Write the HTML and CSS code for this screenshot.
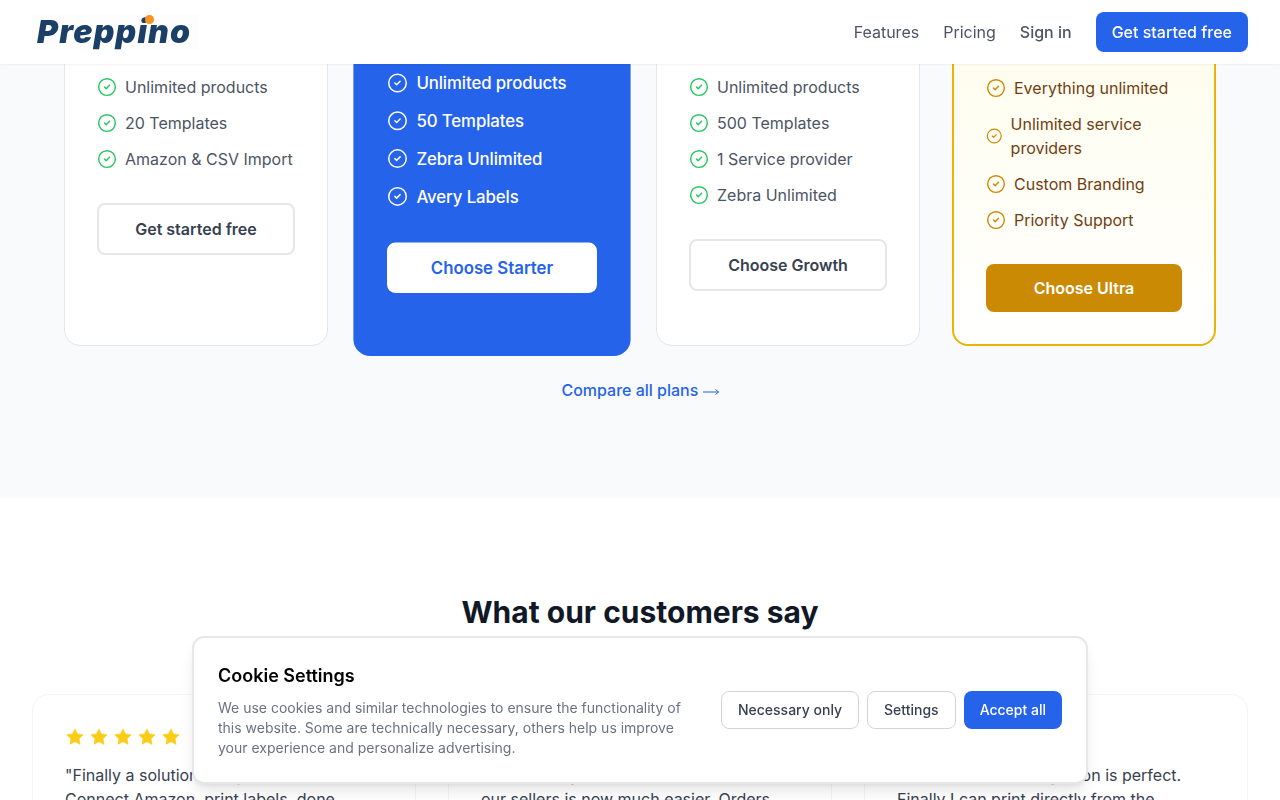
FILE: index.html
```html
<!DOCTYPE html>
<html lang="en">
<head>
    <meta charset="UTF-8">
    <title>Preppino</title>
    <link rel="stylesheet" href="styles.css">
</head>
<body>
    <!-- Top bar -->
    <header class="header">
        <a class="logo" href="#">Preppino<span class="logo-dot"></span></a>
        <nav class="nav">
            <a href="#">Features</a>
            <a href="#">Pricing</a>
            <a class="nav-signin" href="#">Sign in</a>
            <a class="btn-nav" href="#">Get started free</a>
        </nav>
    </header>

    <main class="page">
        <!-- Pricing -->
        <section class="pricing">
            <div class="plans">
                <div class="plan">
                    <ul class="features">
                        <li><svg class="check" viewBox="0 0 24 24"><circle cx="12" cy="12" r="10"/><path d="m9 12 2 2 4-4"/></svg>Unlimited products</li>
                        <li><svg class="check" viewBox="0 0 24 24"><circle cx="12" cy="12" r="10"/><path d="m9 12 2 2 4-4"/></svg>20 Templates</li>
                        <li><svg class="check" viewBox="0 0 24 24"><circle cx="12" cy="12" r="10"/><path d="m9 12 2 2 4-4"/></svg>Amazon &amp; CSV Import</li>
                    </ul>
                    <a class="btn-plan" href="#">Get started free</a>
                </div>
                <div class="plan plan-popular">
                    <ul class="features">
                        <li><svg class="check" viewBox="0 0 24 24"><circle cx="12" cy="12" r="10"/><path d="m9 12 2 2 4-4"/></svg>Unlimited products</li>
                        <li><svg class="check" viewBox="0 0 24 24"><circle cx="12" cy="12" r="10"/><path d="m9 12 2 2 4-4"/></svg>50 Templates</li>
                        <li><svg class="check" viewBox="0 0 24 24"><circle cx="12" cy="12" r="10"/><path d="m9 12 2 2 4-4"/></svg>Zebra Unlimited</li>
                        <li><svg class="check" viewBox="0 0 24 24"><circle cx="12" cy="12" r="10"/><path d="m9 12 2 2 4-4"/></svg>Avery Labels</li>
                    </ul>
                    <a class="btn-plan" href="#">Choose Starter</a>
                </div>
                <div class="plan">
                    <ul class="features">
                        <li><svg class="check" viewBox="0 0 24 24"><circle cx="12" cy="12" r="10"/><path d="m9 12 2 2 4-4"/></svg>Unlimited products</li>
                        <li><svg class="check" viewBox="0 0 24 24"><circle cx="12" cy="12" r="10"/><path d="m9 12 2 2 4-4"/></svg>500 Templates</li>
                        <li><svg class="check" viewBox="0 0 24 24"><circle cx="12" cy="12" r="10"/><path d="m9 12 2 2 4-4"/></svg>1 Service provider</li>
                        <li><svg class="check" viewBox="0 0 24 24"><circle cx="12" cy="12" r="10"/><path d="m9 12 2 2 4-4"/></svg>Zebra Unlimited</li>
                    </ul>
                    <a class="btn-plan" href="#">Choose Growth</a>
                </div>
                <div class="plan plan-ultra">
                    <ul class="features">
                        <li><svg class="check" viewBox="0 0 24 24"><circle cx="12" cy="12" r="10"/><path d="m9 12 2 2 4-4"/></svg>Everything unlimited</li>
                        <li><svg class="check" viewBox="0 0 24 24"><circle cx="12" cy="12" r="10"/><path d="m9 12 2 2 4-4"/></svg><span>Unlimited service providers</span></li>
                        <li><svg class="check" viewBox="0 0 24 24"><circle cx="12" cy="12" r="10"/><path d="m9 12 2 2 4-4"/></svg>Custom Branding</li>
                        <li><svg class="check" viewBox="0 0 24 24"><circle cx="12" cy="12" r="10"/><path d="m9 12 2 2 4-4"/></svg>Priority Support</li>
                    </ul>
                    <a class="btn-plan" href="#">Choose Ultra</a>
                </div>
            </div>
            <a class="compare" href="#">Compare all plans <svg class="arrow" viewBox="0 0 16 8"><path d="M0 4h15.5M12.5 1.5 15.5 4l-3 2.5"/></svg></a>
        </section>

        <!-- Testimonials -->
        <section class="reviews">
            <h2>What our customers say</h2>
            <div class="review-grid">
                <div class="review">
                    <div class="stars">
                        <svg viewBox="0 0 24 24"><path d="M12 2l3.09 6.26L22 9.27l-5 4.87 1.18 6.88L12 17.77l-6.18 3.25L7 14.14 2 9.27l6.91-1.01L12 2z"/></svg>
                        <svg viewBox="0 0 24 24"><path d="M12 2l3.09 6.26L22 9.27l-5 4.87 1.18 6.88L12 17.77l-6.18 3.25L7 14.14 2 9.27l6.91-1.01L12 2z"/></svg>
                        <svg viewBox="0 0 24 24"><path d="M12 2l3.09 6.26L22 9.27l-5 4.87 1.18 6.88L12 17.77l-6.18 3.25L7 14.14 2 9.27l6.91-1.01L12 2z"/></svg>
                        <svg viewBox="0 0 24 24"><path d="M12 2l3.09 6.26L22 9.27l-5 4.87 1.18 6.88L12 17.77l-6.18 3.25L7 14.14 2 9.27l6.91-1.01L12 2z"/></svg>
                        <svg viewBox="0 0 24 24"><path d="M12 2l3.09 6.26L22 9.27l-5 4.87 1.18 6.88L12 17.77l-6.18 3.25L7 14.14 2 9.27l6.91-1.01L12 2z"/></svg>
                    </div>
                    <p>"Finally a solution to my label chaos. Connect Amazon, print labels, done.</p>
                </div>
                <div class="review">
                    <div class="stars">
                        <svg viewBox="0 0 24 24"><path d="M12 2l3.09 6.26L22 9.27l-5 4.87 1.18 6.88L12 17.77l-6.18 3.25L7 14.14 2 9.27l6.91-1.01L12 2z"/></svg>
                        <svg viewBox="0 0 24 24"><path d="M12 2l3.09 6.26L22 9.27l-5 4.87 1.18 6.88L12 17.77l-6.18 3.25L7 14.14 2 9.27l6.91-1.01L12 2z"/></svg>
                        <svg viewBox="0 0 24 24"><path d="M12 2l3.09 6.26L22 9.27l-5 4.87 1.18 6.88L12 17.77l-6.18 3.25L7 14.14 2 9.27l6.91-1.01L12 2z"/></svg>
                        <svg viewBox="0 0 24 24"><path d="M12 2l3.09 6.26L22 9.27l-5 4.87 1.18 6.88L12 17.77l-6.18 3.25L7 14.14 2 9.27l6.91-1.01L12 2z"/></svg>
                        <svg viewBox="0 0 24 24"><path d="M12 2l3.09 6.26L22 9.27l-5 4.87 1.18 6.88L12 17.77l-6.18 3.25L7 14.14 2 9.27l6.91-1.01L12 2z"/></svg>
                    </div>
                    <p>"Onboarding the whole team and all of our sellers is now much easier. Orders</p>
                </div>
                <div class="review">
                    <div class="stars">
                        <svg viewBox="0 0 24 24"><path d="M12 2l3.09 6.26L22 9.27l-5 4.87 1.18 6.88L12 17.77l-6.18 3.25L7 14.14 2 9.27l6.91-1.01L12 2z"/></svg>
                        <svg viewBox="0 0 24 24"><path d="M12 2l3.09 6.26L22 9.27l-5 4.87 1.18 6.88L12 17.77l-6.18 3.25L7 14.14 2 9.27l6.91-1.01L12 2z"/></svg>
                        <svg viewBox="0 0 24 24"><path d="M12 2l3.09 6.26L22 9.27l-5 4.87 1.18 6.88L12 17.77l-6.18 3.25L7 14.14 2 9.27l6.91-1.01L12 2z"/></svg>
                        <svg viewBox="0 0 24 24"><path d="M12 2l3.09 6.26L22 9.27l-5 4.87 1.18 6.88L12 17.77l-6.18 3.25L7 14.14 2 9.27l6.91-1.01L12 2z"/></svg>
                        <svg viewBox="0 0 24 24"><path d="M12 2l3.09 6.26L22 9.27l-5 4.87 1.18 6.88L12 17.77l-6.18 3.25L7 14.14 2 9.27l6.91-1.01L12 2z"/></svg>
                    </div>
                    <p>"Smart Amazon integration is perfect. Finally I can print directly from the</p>
                </div>
            </div>
        </section>
    </main>

    <!-- Cookie banner -->
    <div class="cookie">
        <div class="cookie-text">
            <h3>Cookie Settings</h3>
            <p>We use cookies and similar technologies to ensure the functionality of this website. Some are technically necessary, others help us improve your experience and personalize advertising.</p>
        </div>
        <div class="cookie-actions">
            <button class="btn-outline">Necessary only</button>
            <button class="btn-outline">Settings</button>
            <button class="btn-accept">Accept all</button>
        </div>
    </div>
</body>
</html>
```

FILE: styles.css
```css
/* General */
* {
    box-sizing: border-box;
}

html, body {
    height: 800px;
    overflow: hidden;
}

body {
    margin: 0;
    font-family: Inter, "Liberation Sans", sans-serif;
    font-size: 16px;
    line-height: 24px;
    color: #111827;
    background-color: #FFFFFF;
}

a {
    text-decoration: none;
}

/* Top bar */
.header {
    position: fixed;
    top: 0;
    left: 0;
    z-index: 10;
    width: 100%;
    height: 64px;
    padding: 0 32px;
    display: flex;
    align-items: center;
    justify-content: space-between;
    background-color: #FFFFFF;
    box-shadow: 0 1px 2px rgba(0, 0, 0, 0.05);
}

.logo {
    position: relative;
    width: 166px;
    height: 36px;
    padding-left: 5px;
    font-size: 32px;
    font-weight: 900;
    font-style: italic;
    line-height: 36px;
    letter-spacing: 1.2px;
    color: #1B3F66;
    background-color: #FDFDFE;
}

.logo-dot {
    position: absolute;
    top: 1px;
    left: 113px;
    width: 9px;
    height: 9px;
    border-radius: 50%;
    background-color: #F7931E;
}

.nav {
    display: flex;
    align-items: center;
    gap: 24px;
}

.nav a {
    color: #4B5563;
}

.nav .nav-signin {
    font-weight: 500;
}

.nav .btn-nav {
    padding: 8px 16px;
    border-radius: 8px;
    background-color: #2563EB;
    color: #FFFFFF;
    font-weight: 500;
}

/* The page is shown scrolled down, the top of the plans is under the bar */
.page {
    margin-top: -54px;
}

/* Pricing */
.pricing {
    padding: 0 64px 96px;
    text-align: center;
    background-color: #F9FAFB;
}

.plans {
    display: grid;
    grid-template-columns: repeat(4, 1fr);
    gap: 32px;
    margin-bottom: 32px;
    text-align: left;
}

.plan {
    height: 400px;
    padding: 128px 32px 32px;
    border: 1px solid #E5E7EB;
    border-radius: 16px;
    background-color: #FFFFFF;
}

.features {
    margin: 0 0 32px;
    padding: 0;
    list-style: none;
    display: flex;
    flex-direction: column;
    gap: 12px;
    color: #4B5563;
}

.features li {
    display: flex;
    align-items: center;
    gap: 8px;
}

.check {
    width: 20px;
    height: 20px;
    fill: none;
    stroke: #22C55E;
    stroke-width: 1.7;
    stroke-linecap: round;
    stroke-linejoin: round;
}

.btn-plan {
    display: block;
    padding: 12px 16px;
    border: 2px solid #E5E7EB;
    border-radius: 8px;
    text-align: center;
    color: #374151;
    font-weight: 600;
}

/* Middle plan */
.plan-popular {
    border: none;
    background-color: #2563EB;
    transform: scale(1.05);
}

.plan-popular .features {
    font-weight: 500;
    letter-spacing: -0.1px;
    color: #FFFFFF;
}

.plan-popular .check {
    stroke: #FFFFFF;
}

.plan-popular .btn-plan {
    border: none;
    background-color: #FFFFFF;
    color: #2563EB;
}

/* Gold plan */
.plan-ultra {
    border: 2px solid #EAB308;
    background: linear-gradient(to bottom, #FEFCE8, #FFFFFF);
}

.plan-ultra .features {
    color: #713F12;
}

.plan-ultra .check {
    stroke: #CA8A04;
}

.plan-ultra .btn-plan {
    border: none;
    background-color: #CA8A04;
    color: #FFFFFF;
}

.compare {
    color: #2563EB;
    font-weight: 500;
}

.arrow {
    width: 16px;
    height: 8px;
    fill: none;
    stroke: #2563EB;
    stroke-width: 1;
}

/* Testimonials */
.reviews {
    padding: 96px 32px;
    background-color: #FFFFFF;
}

.reviews h2 {
    margin: 0 0 64px;
    font-size: 30px;
    line-height: 36px;
    font-weight: 700;
    text-align: center;
    color: #111827;
}

.review-grid {
    display: grid;
    grid-template-columns: repeat(3, 1fr);
    gap: 32px;
}

.review {
    padding: 32px;
    border: 1px solid #F3F4F6;
    border-radius: 16px;
    background-color: #FFFFFF;
}

.stars {
    display: flex;
    gap: 4px;
    margin-bottom: 16px;
}

.stars svg {
    width: 20px;
    height: 20px;
    fill: #FACC15;
    stroke: #FACC15;
    stroke-width: 0.5;
    stroke-linejoin: round;
}

.review p {
    margin: 0;
    color: #374151;
}

/* Cookie banner */
.cookie {
    position: fixed;
    left: 192px;
    bottom: 16px;
    z-index: 20;
    width: 896px;
    padding: 24px;
    display: flex;
    align-items: center;
    gap: 24px;
    border: 2px solid #E5E7EB;
    border-radius: 12px;
    background-color: #FFFFFF;
    box-shadow: 0 10px 15px -3px rgba(0, 0, 0, 0.1), 0 4px 6px -4px rgba(0, 0, 0, 0.1);
}

.cookie-text {
    flex: 1;
}

.cookie h3 {
    margin: 0 0 8px;
    font-size: 18px;
    line-height: 28px;
    font-weight: 600;
    color: #000000;
}

.cookie p {
    margin: 0;
    font-size: 14px;
    line-height: 20px;
    color: #6B7280;
}

.cookie-actions {
    display: flex;
    gap: 8px;
}

.cookie button {
    padding: 8px 16px;
    border-radius: 8px;
    font-family: Inter, "Liberation Sans", sans-serif;
    font-size: 14px;
    line-height: 20px;
    font-weight: 500;
}

.btn-outline {
    border: 1px solid #D1D5DB;
    background-color: #FFFFFF;
    color: #374151;
}

.cookie .btn-accept {
    padding: 9px 16px;
    border: none;
    background-color: #2563EB;
    color: #FFFFFF;
}
```
